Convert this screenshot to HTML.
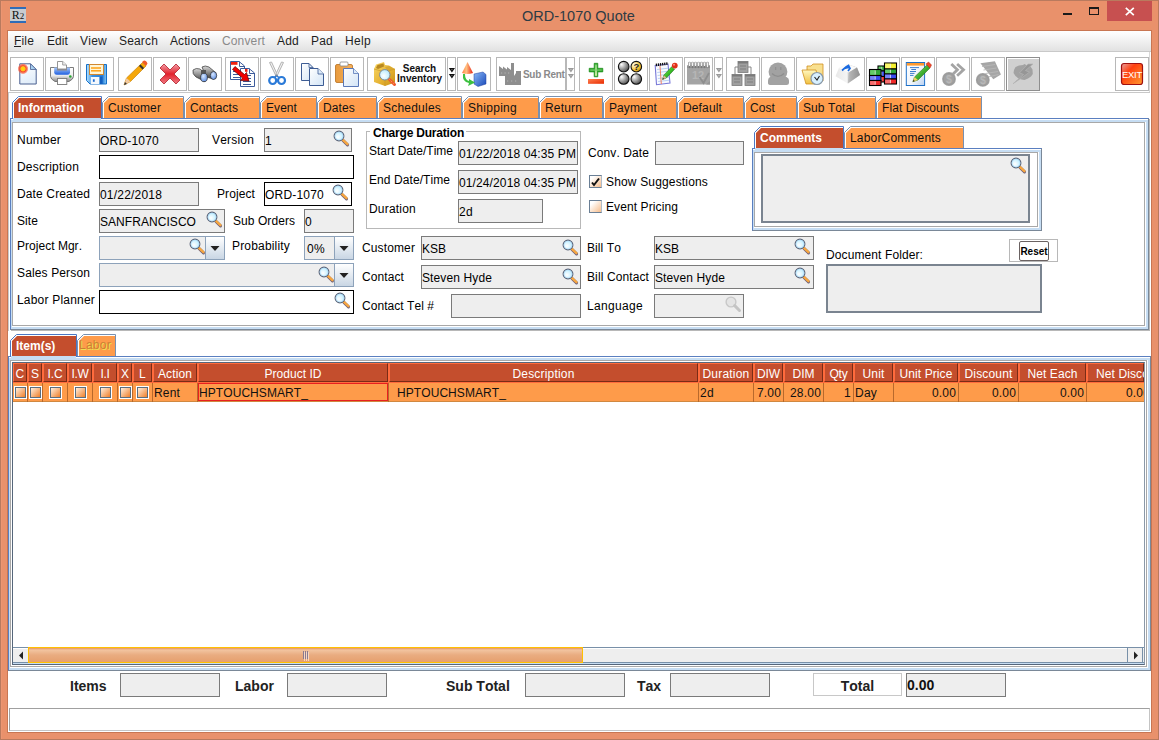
<!DOCTYPE html>
<html><head><meta charset="utf-8"><style>
*{box-sizing:border-box}
html,body{margin:0;padding:0;width:1159px;height:740px;overflow:hidden;background:#E9916B;font-family:"Liberation Sans",sans-serif;font-size:12px;color:#000}
.a{position:absolute}
.t{position:absolute;white-space:nowrap;line-height:14px;font-size:12px;font-kerning:none}
svg{position:absolute;overflow:visible}
</style></head><body>
<div class="a" style="left:0px;top:0px;width:1159px;height:740px;border:1px solid #B97A5E"></div>
<div class="a" style="left:10px;top:7px;width:16px;height:16px;background:#C9CCD0;border-top:2px solid #2F6CB8;border-bottom:2px solid #2F6CB8;font-family:'Liberation Serif';font-size:12px;line-height:12px;color:#111;text-align:center">R<span style="font-size:9px">2</span></div>
<div class="t" style="left:522px;top:6px;font-size:14.5px;line-height:20px;color:#2E3B44">ORD-1070 Quote</div>
<div class="a" style="left:1063px;top:13px;width:9px;height:2px;background:#1a1a1a"></div>
<div class="a" style="left:1089px;top:7px;width:10px;height:8px;border:1px solid #1a1a1a;border-top-width:2px"></div>
<div class="a" style="left:1107px;top:1px;width:45px;height:20px;background:#C75050"></div>
<svg style="left:1124px;top:6px" width="11" height="10" viewBox="0 0 11 10"><path d="M1.8 1.8L9.8 9.2M9.8 1.8L1.8 9.2" stroke="#fff" stroke-width="1.7"/></svg>
<div class="a" style="left:7px;top:30px;width:1145px;height:703px;background:#fff;border:1px solid #C87652"></div>
<div class="a" style="left:1px;top:1px;width:1px;height:738px;background:#EC9672"></div>
<div class="a" style="left:8px;top:31px;width:1143px;height:21px;background:linear-gradient(#FFFFFF,#F4F4F4 40%,#E2E2E2);border-bottom:1px solid #C9C9C9"></div>
<div class="t" style="left:14px;top:34px;line-height:14px;font-size:12px;color:#1E1E1E;letter-spacing:0.166px">File</div>
<div class="t" style="left:47px;top:34px;line-height:14px;font-size:12px;color:#1E1E1E;letter-spacing:0.081px">Edit</div>
<div class="t" style="left:80px;top:34px;line-height:14px;font-size:12px;color:#1E1E1E;letter-spacing:0.248px">View</div>
<div class="t" style="left:119px;top:34px;line-height:14px;font-size:12px;color:#1E1E1E;letter-spacing:0.163px">Search</div>
<div class="t" style="left:170px;top:34px;line-height:14px;font-size:12px;color:#1E1E1E;letter-spacing:0.093px">Actions</div>
<div class="t" style="left:222px;top:34px;line-height:14px;font-size:12px;color:#8A8A8A;letter-spacing:0.140px">Convert</div>
<div class="t" style="left:277px;top:34px;line-height:14px;font-size:12px;color:#1E1E1E;letter-spacing:0.216px">Add</div>
<div class="t" style="left:311px;top:34px;line-height:14px;font-size:12px;color:#1E1E1E;letter-spacing:0.216px">Pad</div>
<div class="t" style="left:345px;top:34px;line-height:14px;font-size:12px;color:#1E1E1E;letter-spacing:0.330px">Help</div>
<div class="a" style="left:14px;top:46px;width:7px;height:1px;background:#1E1E1E"></div>
<svg style="left:0;top:0" width="0" height="0"><defs><radialGradient id="glass" cx="0.4" cy="0.6" r="0.75"><stop offset="0" stop-color="#FFFFFF"/><stop offset="0.55" stop-color="#CFF2FF"/><stop offset="1" stop-color="#A6DDF6"/></radialGradient><linearGradient id="gcp" x1="0" y1="0" x2="1" y2="1"><stop offset="0" stop-color="#FFFFFF"/><stop offset="1" stop-color="#D2E4F6"/></linearGradient></defs></svg>
<div class="a" style="left:8px;top:92px;width:1142px;height:1px;background:#C8C8C8"></div>
<div class="a" style="left:1149px;top:52px;width:1px;height:40px;background:#D8D8D8"></div>
<div class="a" style="left:10px;top:57px;width:34px;height:34px;border:1px solid #B8B8B8;background:#fff"></div><svg style="left:10px;top:57px" width="34" height="34" viewBox="0 0 34 34"><defs><linearGradient id="gnew" x1="0" y1="0" x2="0.3" y2="1"><stop offset="0" stop-color="#FFFFFF"/><stop offset="1" stop-color="#E2EEFA"/></linearGradient><radialGradient id="gburst"><stop offset="0" stop-color="#FFE000"/><stop offset="0.4" stop-color="#FFC020"/><stop offset="0.55" stop-color="#F84828"/><stop offset="0.85" stop-color="#F86040" stop-opacity="0.6"/><stop offset="1" stop-color="#FF8060" stop-opacity="0"/></radialGradient></defs><path d="M9.8 6.8H20.5L26.2 12.5V27H9.8Z" fill="url(#gnew)" stroke="#4A6090" stroke-width="1"/><path d="M20.5 6.8V12.5H26.2Z" fill="#A8D0F0" stroke="#4A6090" stroke-width="0.8"/><circle cx="13" cy="11.8" r="5.5" fill="url(#gburst)"/></svg>
<div class="a" style="left:45px;top:57px;width:34px;height:34px;border:1px solid #B8B8B8;background:#fff"></div><svg style="left:45px;top:57px" width="34" height="34" viewBox="0 0 34 34"><defs><linearGradient id="gpr" x1="0" y1="0" x2="0" y2="1"><stop offset="0" stop-color="#FFFFFF"/><stop offset="0.55" stop-color="#F0F0F0"/><stop offset="1" stop-color="#8E8E8E"/></linearGradient><linearGradient id="gtray" x1="0" y1="0" x2="0" y2="1"><stop offset="0" stop-color="#A8C8F8"/><stop offset="1" stop-color="#1E5EE0"/></linearGradient></defs><path d="M5.5 10.5H28.5V19.5Q28.5 22 24 24.5H10Q5.5 22 5.5 19.5Z" fill="url(#gpr)" stroke="#6E6E6E" stroke-width="0.9"/><path d="M9.2 10.5H25V15.5Q25 17.8 22.5 17.8H11.7Q9.2 17.8 9.2 15.5Z" fill="url(#gtray)"/><rect x="12" y="12" width="10" height="1.6" fill="#8A8A98"/><path d="M12.5 4.5H17.7L21.5 8V12H12.5Z" fill="#fff" stroke="#8A8A8A" stroke-width="0.9"/><path d="M17.7 4.5V8H21.5" fill="#F0F0F0" stroke="#8A8A8A" stroke-width="0.8"/><rect x="12.5" y="21.5" width="9.3" height="6" fill="#fff" stroke="#7A7A7A" stroke-width="0.9"/><circle cx="25.3" cy="19.5" r="1.3" fill="#28A830"/></svg>
<div class="a" style="left:80px;top:57px;width:34px;height:34px;border:1px solid #B8B8B8;background:#fff"></div><svg style="left:80px;top:57px" width="34" height="34" viewBox="0 0 34 34"><defs><linearGradient id="gfl" x1="0" y1="0" x2="1" y2="0"><stop offset="0" stop-color="#B8E4FF"/><stop offset="0.3" stop-color="#3A90E0"/><stop offset="0.8" stop-color="#2A80D8"/><stop offset="1" stop-color="#8ACCF8"/></linearGradient></defs><path d="M6.5 7.5H26.5V27H10L6.5 23.5Z" fill="url(#gfl)" stroke="#1670C8" stroke-width="1"/><rect x="9.5" y="7.5" width="14" height="10" fill="#FFF6D8" stroke="#D08830" stroke-width="1"/><rect x="11" y="10.2" width="10" height="1.6" fill="#FFA620"/><rect x="11" y="13" width="10" height="1.6" fill="#FFA620"/><rect x="10.8" y="20" width="8.5" height="7" fill="#F4F8FC"/><rect x="12.9" y="22.3" width="1.8" height="2.5" fill="#1E6AD0"/><rect x="20" y="19.5" width="2.5" height="7.5" fill="#1460C0"/></svg>
<div class="a" style="left:118px;top:57px;width:34px;height:34px;border:1px solid #B8B8B8;background:#fff"></div><svg style="left:118px;top:57px" width="34" height="34" viewBox="0 0 34 34"><path d="M6 28L8.5 21L24.5 5.5L28 9L12.5 24.5Z" fill="#F5A70A" stroke="#C07800" stroke-width="0.6"/><path d="M6 28L8.5 21L12.5 24.5Z" fill="#F2C9A0"/><path d="M6 28L7 25L9 27Z" fill="#333"/><path d="M22.5 7.5L26 11L24.5 12.5L21 9Z" fill="#333"/><path d="M24 5L26 3.5Q28.5 3.5 29.5 6.5L28 9Z" fill="#F05A28"/></svg>
<div class="a" style="left:153px;top:57px;width:34px;height:34px;border:1px solid #B8B8B8;background:#fff"></div><svg style="left:153px;top:57px" width="34" height="34" viewBox="0 0 34 34"><defs><linearGradient id="gx" x1="0" y1="0" x2="0" y2="1"><stop offset="0" stop-color="#F4A0A8"/><stop offset="0.5" stop-color="#E2202C"/><stop offset="1" stop-color="#F07C84"/></linearGradient></defs><path d="M7 11L11 7L17 13L23 7L27 11L21 17L27 23L23 27L17 21L11 27L7 23L13 17Z" fill="url(#gx)" stroke="#B01C28" stroke-width="0.8" stroke-linejoin="round"/></svg>
<div class="a" style="left:188px;top:57px;width:34px;height:34px;border:1px solid #B8B8B8;background:#fff"></div><svg style="left:188px;top:57px" width="34" height="34" viewBox="0 0 34 34"><defs><linearGradient id="gbn" x1="0" y1="0" x2="0" y2="1"><stop offset="0" stop-color="#D8D8D8"/><stop offset="0.5" stop-color="#8A8A8A"/><stop offset="1" stop-color="#3A3A3A"/></linearGradient><radialGradient id="glens" cx="0.4" cy="0.35" r="0.7"><stop offset="0" stop-color="#D8E8FF"/><stop offset="1" stop-color="#5A8AE0"/></radialGradient></defs><path d="M14 10Q17 8 21 10L27 15Q29 19 26 22L18 20Z" fill="url(#gbn)" stroke="#333" stroke-width="0.7"/><path d="M5 13Q8 10.5 12 12L18 17Q20 21 17 24.5L8 20Q4 17 5 13Z" fill="url(#gbn)" stroke="#333" stroke-width="0.7"/><rect x="13" y="13" width="5" height="4" fill="#555"/><ellipse cx="16" cy="20.5" rx="3.4" ry="4.2" fill="url(#glens)" stroke="#333" stroke-width="0.8"/><ellipse cx="25.5" cy="18.5" rx="3.2" ry="4" fill="url(#glens)" stroke="#333" stroke-width="0.8"/></svg>
<div class="a" style="left:225px;top:57px;width:34px;height:34px;border:1px solid #B8B8B8;background:#fff"></div><svg style="left:225px;top:57px" width="34" height="34" viewBox="0 0 34 34"><path d="M5.5 4.5H14L19.5 9V22.5H5.5Z" fill="#fff" stroke="#3D5C9C" stroke-width="1"/><path d="M14.5 4.5V9.5H19.5" fill="none" stroke="#3D5C9C" stroke-width="1"/><rect x="6" y="5" width="6.5" height="2.8" fill="#F02010"/><path d="M8 14.5H12M8 17.5H16M8 20.5H16" stroke="#3D5C9C" stroke-width="1"/><path d="M15.5 11.5H24L29.5 16V29.5H15.5Z" fill="#fff" stroke="#3D5C9C" stroke-width="1"/><path d="M24.5 11.5V16.5H29.5" fill="none" stroke="#3D5C9C" stroke-width="1"/><rect x="20" y="12" width="2.5" height="2.8" fill="#F02010"/><path d="M18 18.5H26M18 21.5H26M18 24.5H26M18 27.5H26" stroke="#3D5C9C" stroke-width="1"/><path d="M7.5 12.5L10 9.5L19.5 17.5L21.5 15.5L24 24L15.5 23.5L17.5 21Z" fill="#F00000" stroke="#600000" stroke-width="0.7" stroke-linejoin="round"/></svg>
<div class="a" style="left:260px;top:57px;width:34px;height:34px;border:1px solid #B8B8B8;background:#fff"></div><svg style="left:260px;top:57px" width="34" height="34" viewBox="0 0 34 34"><path d="M9.5 5.5L11.5 5L17.5 18L16 19Z" fill="#F0F0F0" stroke="#B4B4B4" stroke-width="1" stroke-linejoin="round"/><path d="M23.5 5.5L21.5 5L15.5 18L17 19Z" fill="#F0F0F0" stroke="#B4B4B4" stroke-width="1" stroke-linejoin="round"/><circle cx="12.7" cy="23.5" r="3.5" fill="none" stroke="#2A7AD8" stroke-width="2.2"/><circle cx="21.5" cy="23.5" r="3.5" fill="none" stroke="#2A7AD8" stroke-width="2.2"/><path d="M14.5 20.5L16.5 18.5L18.8 20.5" fill="none" stroke="#2A7AD8" stroke-width="1.6"/><circle cx="16.5" cy="18.5" r="0.9" fill="#888"/></svg>
<div class="a" style="left:295px;top:57px;width:34px;height:34px;border:1px solid #B8B8B8;background:#fff"></div><svg style="left:295px;top:57px" width="34" height="34" viewBox="0 0 34 34"><defs><linearGradient id="gcp" x1="0" y1="0" x2="1" y2="1"><stop offset="0" stop-color="#FFFFFF"/><stop offset="1" stop-color="#D2E4F6"/></linearGradient></defs><path d="M6.5 6.5H14L18 10.5V23.5H6.5Z" fill="url(#gcp)" stroke="#3D5C94"/><path d="M14 6.5V10.5H18" fill="none" stroke="#3D5C94" stroke-width="0.8"/><path d="M14.5 11.5H23L28.5 17V28.5H14.5Z" fill="url(#gcp)" stroke="#3D5C94"/><path d="M23 11.5V17H28.5" fill="#DCEBFA" stroke="#3D5C94" stroke-width="0.8"/></svg>
<div class="a" style="left:330px;top:57px;width:34px;height:34px;border:1px solid #B8B8B8;background:#fff"></div><svg style="left:330px;top:57px" width="34" height="34" viewBox="0 0 34 34"><defs><linearGradient id="gps" x1="0" y1="0" x2="1" y2="0"><stop offset="0" stop-color="#E89A3C"/><stop offset="1" stop-color="#F6B25E"/></linearGradient></defs><rect x="5.5" y="7.5" width="17" height="18" rx="1.5" fill="url(#gps)" stroke="#B87020" stroke-width="0.8"/><rect x="10" y="5" width="8" height="4" rx="1" fill="#fff" stroke="#888" stroke-width="0.8"/><path d="M13.5 11.5H23.5L28.5 16.5V29.5H13.5Z" fill="url(#gcp)" stroke="#5A78B8"/><path d="M23.5 11.5V16.5H28.5" fill="#DCEBFA" stroke="#5A78B8" stroke-width="0.8"/></svg>
<div class="a" style="left:367px;top:57px;width:79px;height:34px;border:1px solid #B8B8B8;background:#fff"></div><svg style="left:367px;top:57px" width="79" height="34" viewBox="0 0 79 34"><defs><linearGradient id="gbox" x1="0" y1="0" x2="1" y2="1"><stop offset="0" stop-color="#F8D868"/><stop offset="0.6" stop-color="#E4B030"/><stop offset="1" stop-color="#C89018"/></linearGradient></defs><path d="M7 12L9 7.5L17 5L18 8L22 8.5L28 12V25.5L18 29L7 25Z" fill="url(#gbox)"/><path d="M9 11L10.5 8L16.5 6.5L17 9.5L11 12Z" fill="#B88820"/><path d="M18 10L22 9L27 12L21 14Z" fill="#D8A830"/><path d="M7 12L18 15L28 12M18 15V29" fill="none" stroke="#C89828" stroke-width="0.7"/><line x1="22.5" y1="22.5" x2="27.5" y2="27.5" stroke="#F05830" stroke-width="3" stroke-linecap="round"/><line x1="22.5" y1="22.5" x2="27.5" y2="27.5" stroke="#F8C040" stroke-width="1" stroke-dasharray="1.2 1.2"/><circle cx="17.8" cy="17.8" r="5.2" fill="url(#glass)" stroke="#7A8A9A" stroke-width="1"/></svg>
<div class="t" style="left:397px;top:63px;width:45px;text-align:center;font-weight:bold;font-size:10px;line-height:12px;color:#111">Search</div>
<div class="t" style="left:397px;top:72.5px;width:45px;text-align:center;font-weight:bold;font-size:10px;line-height:12px;color:#111">Inventory</div>
<div class="a" style="left:447px;top:57px;width:9px;height:34px;border:1px solid #B8B8B8;background:#fff"></div><svg style="left:447px;top:57px" width="9" height="34" viewBox="0 0 9 34"><path d="M1.8 11H8L4.9 15.6Z" fill="#111"/><path d="M1.8 17H8L4.9 21.6Z" fill="#111"/><circle cx="4.9" cy="12.6" r="0.7" fill="#777"/><circle cx="4.9" cy="18.6" r="0.7" fill="#777"/></svg>
<div class="a" style="left:457px;top:57px;width:34px;height:34px;border:1px solid #B8B8B8;background:#fff"></div><svg style="left:457px;top:57px" width="34" height="34" viewBox="0 0 34 34"><defs><linearGradient id="gcone" x1="0" y1="0" x2="1" y2="0"><stop offset="0" stop-color="#FF8040"/><stop offset="0.4" stop-color="#FFC080"/><stop offset="1" stop-color="#E82010"/></linearGradient><linearGradient id="gcube" x1="0" y1="0" x2="1" y2="1"><stop offset="0" stop-color="#8AB8F8"/><stop offset="1" stop-color="#1848B8"/></linearGradient></defs><path d="M10.5 5L16 16Q10.5 18 5 16Z" fill="url(#gcone)"/><path d="M17 17L26 15L29 17.5V27L21 29.5L17 27Z" fill="url(#gcube)" stroke="#2040A0" stroke-width="0.5"/><path d="M6 17Q5 25 12 26L11 29L18 25.5L12 22L12 24Q8 23 8 17Z" fill="#3CC040"/></svg>
<div class="a" style="left:496px;top:57px;width:70px;height:34px;border:1px solid #B8B8B8;background:#fff"></div><svg style="left:496px;top:57px" width="70" height="34" viewBox="0 0 70 34"><path d="M3 9L7 12V9.5L11 12.5V10L15 13V6H18V19H3Z" fill="#8E8E8E"/><path d="M9 15H18V19L20 16V14H25V28H9Z" fill="#8E8E8E"/><path d="M5 16H6.2M8.5 16H9.7M12 16H13.2M11 24H12.2M15 24H16.2M19 24H20.2" stroke="#B4B4B4" stroke-width="1.2"/></svg>
<div class="t" style="left:523px;top:69px;font-weight:bold;font-size:10px;line-height:12px;color:#8A8A8A;letter-spacing:-0.3px">Sub Rent</div>
<div class="a" style="left:566px;top:57px;width:9px;height:34px;border:1px solid #B8B8B8;background:#fff"></div><svg style="left:566px;top:57px" width="9" height="34" viewBox="0 0 9 34"><path d="M1.8 11H8L4.9 15.6Z" fill="#9A9A9A"/><path d="M1.8 17H8L4.9 21.6Z" fill="#9A9A9A"/><circle cx="4.9" cy="12.6" r="0.7" fill="#C4C4C4"/><circle cx="4.9" cy="18.6" r="0.7" fill="#C4C4C4"/></svg>
<div class="a" style="left:579px;top:57px;width:34px;height:34px;border:1px solid #B8B8B8;background:#fff"></div><svg style="left:579px;top:57px" width="34" height="34" viewBox="0 0 34 34"><defs><linearGradient id="gmn" x1="0" y1="0" x2="1" y2="1"><stop offset="0" stop-color="#FF8050"/><stop offset="1" stop-color="#E82A00"/></linearGradient><linearGradient id="gpl" x1="0" y1="0" x2="0" y2="1"><stop offset="0" stop-color="#8AD880"/><stop offset="1" stop-color="#F4FFC0"/></linearGradient></defs><path d="M15.2 6.3H18.8V11.3H23.8V14.9H18.8V19.8H15.2V14.9H10.2V11.3H15.2Z" fill="#2EA82A" stroke="#1A8A18" stroke-width="0.7"/><rect x="16.2" y="7.5" width="1.6" height="11.3" fill="url(#gpl)"/><rect x="11.3" y="12.3" width="11.4" height="1.6" fill="#7ACC70" opacity="0.7"/><rect x="9" y="22" width="16" height="4.8" fill="url(#gmn)"/></svg>
<div class="a" style="left:614px;top:57px;width:34px;height:34px;border:1px solid #B8B8B8;background:#fff"></div><svg style="left:614px;top:57px" width="34" height="34" viewBox="0 0 34 34"><defs><radialGradient id="gball" cx="0.3" cy="0.3" r="0.85"><stop offset="0" stop-color="#FFFFFF"/><stop offset="0.5" stop-color="#9A9A9A"/><stop offset="1" stop-color="#3A3A3A"/></radialGradient><radialGradient id="gyb" cx="0.3" cy="0.3" r="0.85"><stop offset="0" stop-color="#FFFFF0"/><stop offset="0.6" stop-color="#F4C030"/><stop offset="1" stop-color="#B08010"/></radialGradient></defs><circle cx="9.7" cy="9.7" r="5.3" fill="url(#gball)" stroke="#111" stroke-width="1.1"/><circle cx="22.3" cy="9.7" r="5.3" fill="url(#gyb)" stroke="#111" stroke-width="1.1"/><circle cx="9.7" cy="22" r="5.3" fill="url(#gball)" stroke="#111" stroke-width="1.1"/><circle cx="22.3" cy="22" r="5.3" fill="url(#gball)" stroke="#111" stroke-width="1.1"/><text x="22.3" y="13.3" font-family="Liberation Sans" font-weight="bold" font-size="9.5" text-anchor="middle" fill="#222">?</text></svg>
<div class="a" style="left:649px;top:57px;width:34px;height:34px;border:1px solid #B8B8B8;background:#fff"></div><svg style="left:649px;top:57px" width="34" height="34" viewBox="0 0 34 34"><defs><linearGradient id="gpen" x1="0" y1="0" x2="1" y2="1"><stop offset="0" stop-color="#9AF070"/><stop offset="0.5" stop-color="#3CC028"/><stop offset="1" stop-color="#107A08"/></linearGradient></defs><path d="M6.2 8.5L19 7L21 26L7.5 27.7Z" fill="#F8FAFF" stroke="#7878D8" stroke-width="1.1"/><path d="M8 12.5L19.3 11.2M8.3 15.5L19.6 14.2M8.6 18.5L19.9 17.2M8.9 21.5L20.2 20.2M9.2 24.5L20.5 23.2" stroke="#A8C8F0" stroke-width="0.8"/><path d="M11 9L12.3 27" stroke="#F07050" stroke-width="0.9"/><path d="M6.8 8L19.2 6.5" stroke="#111" stroke-width="2.6" stroke-dasharray="1.3 0.8"/><path d="M13.5 22.5L14.8 18.2L22.8 9.6L25.6 12.2L17.6 20.8Z" fill="url(#gpen)" stroke="#106010" stroke-width="0.5"/><path d="M13.5 22.5L14.8 18.2L17.6 20.8Z" fill="#D8B890"/><path d="M13.5 22.5L14 20.8L15.3 22Z" fill="#333"/><path d="M22.8 9.6L25.6 12.2L26.6 11.2L23.8 8.6Z" fill="#C8C8C8"/><circle cx="25.8" cy="8.6" r="2.9" fill="#E03018"/><circle cx="25" cy="7.8" r="1" fill="#FF9080"/></svg>
<div class="a" style="left:684px;top:57px;width:29px;height:34px;border:1px solid #B8B8B8;background:#fff"></div><svg style="left:684px;top:57px" width="29" height="34" viewBox="0 0 29 34"><path d="M3 8.5H26V27.5H3Z" fill="#A4A4A4"/><path d="M3 8.5H26V11H3Z" fill="#929292"/><path d="M5.5 6V10M8.5 6V10M11.5 6V10M14.5 6V10M17.5 6V10M20.5 6V10M23.5 6V10" stroke="#8A8A8A" stroke-width="2.6" stroke-linecap="round"/><path d="M5.5 6V9.5M8.5 6V9.5M11.5 6V9.5M14.5 6V9.5M17.5 6V9.5M20.5 6V9.5M23.5 6V9.5" stroke="#F4F4F4" stroke-width="1.3" stroke-linecap="round"/><path d="M5.5 9V11M8.5 9V11M11.5 9V11M14.5 9V11M17.5 9V11M20.5 9V11" stroke="#7A7A7A" stroke-width="1"/><text x="14" y="22" font-family="Liberation Sans" font-weight="bold" font-size="11" text-anchor="middle" fill="#B6B6B6">12</text><path d="M15.5 20L19.5 26L25 16" stroke="#8E8E8E" stroke-width="1.8" fill="none"/><path d="M14 27.5H22L26 24V27.5Z" fill="#969696"/></svg>
<div class="a" style="left:714px;top:57px;width:9px;height:34px;border:1px solid #B8B8B8;background:#fff"></div><svg style="left:714px;top:57px" width="9" height="34" viewBox="0 0 9 34"><path d="M1.8 11H8L4.9 15.6Z" fill="#9A9A9A"/><path d="M1.8 17H8L4.9 21.6Z" fill="#9A9A9A"/><circle cx="4.9" cy="12.6" r="0.7" fill="#C4C4C4"/><circle cx="4.9" cy="18.6" r="0.7" fill="#C4C4C4"/></svg>
<div class="a" style="left:726px;top:57px;width:34px;height:34px;border:1px solid #B8B8B8;background:#fff"></div><svg style="left:726px;top:57px" width="34" height="34" viewBox="0 0 34 34"><rect x="12" y="4.5" width="10" height="11" fill="#A0A0A0" stroke="#7A7A7A" stroke-width="0.8"/><rect x="6" y="17.5" width="10" height="11" fill="#A0A0A0" stroke="#7A7A7A" stroke-width="0.8"/><rect x="19" y="17.5" width="10" height="11" fill="#A0A0A0" stroke="#7A7A7A" stroke-width="0.8"/><path d="M12 10H9V17.5M22 10H25V17.5" fill="none" stroke="#7A7A7A" stroke-width="0.9"/><path d="M14 9H20M14 12H20M8 22H14M8 25H14M21 22H27M21 25H27" stroke="#7A7A7A" stroke-width="0.9"/><rect x="12" y="4.5" width="10" height="2" fill="#7A7A7A"/><rect x="6" y="17.5" width="10" height="2" fill="#7A7A7A"/><rect x="19" y="17.5" width="10" height="2" fill="#7A7A7A"/></svg>
<div class="a" style="left:761px;top:57px;width:34px;height:34px;border:1px solid #B8B8B8;background:#fff"></div><svg style="left:761px;top:57px" width="34" height="34" viewBox="0 0 34 34"><circle cx="17" cy="14.8" r="9.4" fill="#A2A2A2"/><path d="M9 20H25.5Q28 21 28 23.5V26Q28 28 25.5 28H10Q7 28 7 26V23.5Q7 21 9 20Z" fill="#A2A2A2"/><path d="M14.7 10V13M19.8 10V13" stroke="#8E8E8E" stroke-width="1.1"/><path d="M11 16.5Q17 22.5 23 16.5" stroke="#8E8E8E" stroke-width="1.2" fill="none"/></svg>
<div class="a" style="left:796px;top:57px;width:34px;height:34px;border:1px solid #B8B8B8;background:#fff"></div><svg style="left:796px;top:57px" width="34" height="34" viewBox="0 0 34 34"><defs><linearGradient id="gfd" x1="0" y1="0" x2="0" y2="1"><stop offset="0" stop-color="#FFF8C0"/><stop offset="1" stop-color="#F0C040"/></linearGradient></defs><path d="M11 9H15L17 7H27V24H11Z" fill="#F8E090" stroke="#D09020" stroke-width="0.8"/><path d="M6 13H20L23 27H10Z" fill="url(#gfd)" stroke="#D09020" stroke-width="0.8"/><circle cx="21" cy="21.5" r="6" fill="#D8F0FF" stroke="#8898A8" stroke-width="1.2"/><path d="M18.5 20L21 23L23.5 19" stroke="#222" stroke-width="1.1" fill="none"/></svg>
<div class="a" style="left:831px;top:57px;width:34px;height:34px;border:1px solid #B8B8B8;background:#fff"></div><svg style="left:831px;top:57px" width="34" height="34" viewBox="0 0 34 34"><defs><linearGradient id="gky" x1="0" y1="0" x2="1" y2="0"><stop offset="0" stop-color="#E8E8E8"/><stop offset="0.45" stop-color="#F4F4F4"/><stop offset="0.6" stop-color="#C8C8C8"/><stop offset="1" stop-color="#8A8A8A"/></linearGradient></defs><path d="M4.5 19.3L7.9 10.9L16.3 6.9L26 10.6L29 18.1L16.9 26.6Z" fill="url(#gky)"/><path d="M7.9 10.9L16.3 6.9L26 10.6L17.5 15.5Z" fill="#FAFAFA"/><path d="M17.5 15.5L26 10.6L29 18.1L16.9 26.6Z" fill="#9A9A9A" opacity="0.45"/><path d="M11 13.5L15 10L17.5 8.5L19 11.5L17 14M12.8 11.8L18.5 10" stroke="#1A6AE0" stroke-width="1.7" fill="none"/></svg>
<div class="a" style="left:866px;top:57px;width:34px;height:34px;border:1px solid #B8B8B8;background:#fff"></div><svg style="left:866px;top:57px" width="34" height="34" viewBox="0 0 34 34"><rect x="12" y="9" width="7.5" height="5" fill="#30A838" stroke="#000" stroke-width="1.1"/><rect x="12.6" y="9.6" width="3.15" height="3.8" fill="#90E890" opacity="0.55"/><path d="M15.75 9.8V13.2" stroke="#F0F0F0" stroke-width="0.8" opacity="0.9"/><rect x="12" y="14" width="7.5" height="5.5" fill="#3A4CF0" stroke="#000" stroke-width="1.1"/><rect x="12.6" y="14.6" width="3.15" height="4.3" fill="#A8B0FF" opacity="0.55"/><path d="M15.75 14.8V18.7" stroke="#F0F0F0" stroke-width="0.8" opacity="0.9"/><rect x="12" y="19.5" width="7.5" height="5.5" fill="#F02A2A" stroke="#000" stroke-width="1.1"/><rect x="12.6" y="20.1" width="3.15" height="4.3" fill="#FFA8A8" opacity="0.55"/><path d="M15.75 20.3V24.2" stroke="#F0F0F0" stroke-width="0.8" opacity="0.9"/><rect x="3.5" y="12.5" width="11.5" height="6.0" fill="#30A838" stroke="#000" stroke-width="1.1"/><rect x="4.1" y="13.1" width="5.15" height="4.8" fill="#90E890" opacity="0.55"/><path d="M9.25 13.3V17.7" stroke="#F0F0F0" stroke-width="0.8" opacity="0.9"/><rect x="3.5" y="18.5" width="11.5" height="5.0" fill="#3A4CF0" stroke="#000" stroke-width="1.1"/><rect x="4.1" y="19.1" width="5.15" height="3.8" fill="#A8B0FF" opacity="0.55"/><path d="M9.25 19.3V22.7" stroke="#F0F0F0" stroke-width="0.8" opacity="0.9"/><rect x="3.5" y="23.5" width="11.5" height="5.0" fill="#F02A2A" stroke="#000" stroke-width="1.1"/><rect x="4.1" y="24.1" width="5.15" height="3.8" fill="#FFA8A8" opacity="0.55"/><path d="M9.25 24.3V27.7" stroke="#F0F0F0" stroke-width="0.8" opacity="0.9"/><rect x="18.5" y="6" width="12" height="6" fill="#F4F030" stroke="#000" stroke-width="1.1"/><rect x="19.1" y="6.6" width="5.4" height="4.8" fill="#FFFFA0" opacity="0.55"/><path d="M24.5 6.8V11.2" stroke="#F0F0F0" stroke-width="0.8" opacity="0.9"/><rect x="18.5" y="12" width="12" height="5" fill="#30A838" stroke="#000" stroke-width="1.1"/><rect x="19.1" y="12.6" width="5.4" height="3.8" fill="#90E890" opacity="0.55"/><path d="M24.5 12.8V16.2" stroke="#F0F0F0" stroke-width="0.8" opacity="0.9"/><rect x="18.5" y="17" width="12" height="5" fill="#3A4CF0" stroke="#000" stroke-width="1.1"/><rect x="19.1" y="17.6" width="5.4" height="3.8" fill="#A8B0FF" opacity="0.55"/><path d="M24.5 17.8V21.2" stroke="#F0F0F0" stroke-width="0.8" opacity="0.9"/><rect x="18.5" y="22" width="12" height="5" fill="#F02A2A" stroke="#000" stroke-width="1.1"/><rect x="19.1" y="22.6" width="5.4" height="3.8" fill="#FFA8A8" opacity="0.55"/><path d="M24.5 22.8V26.2" stroke="#F0F0F0" stroke-width="0.8" opacity="0.9"/></svg>
<div class="a" style="left:901px;top:57px;width:34px;height:34px;border:1px solid #B8B8B8;background:#fff"></div><svg style="left:901px;top:57px" width="34" height="34" viewBox="0 0 34 34"><defs><linearGradient id="ged" x1="0" y1="0" x2="1" y2="1"><stop offset="0" stop-color="#FFFFFF"/><stop offset="0.6" stop-color="#F0F4FA"/><stop offset="1" stop-color="#B8D0F0"/></linearGradient><linearGradient id="gpen2" x1="0" y1="0" x2="1" y2="1"><stop offset="0" stop-color="#A8F088"/><stop offset="0.5" stop-color="#40B030"/><stop offset="1" stop-color="#187010"/></linearGradient></defs><rect x="5.3" y="5.5" width="18.3" height="23" fill="url(#ged)" stroke="#1E70C8" stroke-width="1"/><rect x="5.8" y="6" width="17.3" height="2.6" fill="#FF9A30"/><path d="M9 10.6H18M10.3 12.5H15M9 14.5H15M9 16.4H13.5M9 18.4H12.5" stroke="#2A70C8" stroke-width="0.9"/><path d="M11.8 24.8L13.5 20L26 8L29 11L17 23Z" fill="url(#gpen2)" stroke="#1A6010" stroke-width="0.5"/><path d="M11.8 24.8L13.5 20L17 23Z" fill="#F0D060"/><path d="M11.8 24.8L12.4 23L13.8 24Z" fill="#111"/><path d="M25 7L27.5 5L30.5 8L29 11Z" fill="#F04828" stroke="#B02010" stroke-width="0.5"/></svg>
<div class="a" style="left:936px;top:57px;width:34px;height:34px;border:1px solid #B8B8B8;background:#fff"></div><svg style="left:936px;top:57px" width="34" height="34" viewBox="0 0 34 34"><path d="M15.3 7L21.4 12.7L16 18M21.1 7L27.5 12.7L21.1 18.7" stroke="#A4A4A4" stroke-width="2.8" fill="none" stroke-linejoin="miter"/><circle cx="13" cy="22" r="6.9" fill="#A2A2A2"/><circle cx="13" cy="22" r="5.6" fill="none" stroke="#989898" stroke-width="0.8"/><text x="13" y="26" font-family="Liberation Sans" font-weight="bold" font-size="10.5" text-anchor="middle" fill="#B8B8B8">$</text></svg>
<div class="a" style="left:971px;top:57px;width:34px;height:34px;border:1px solid #B8B8B8;background:#fff"></div><svg style="left:971px;top:57px" width="34" height="34" viewBox="0 0 34 34"><path d="M9.4 6.3L23.9 4.2L29.9 17.5L22.3 22.3Z" fill="#A6A6A6"/><path d="M11 9.5L24 7.5M12.5 13L25.5 11M14.5 16.5L27 14.5M17 20L27.5 17.5" stroke="#B8B8B8" stroke-width="0.9"/><circle cx="11.8" cy="22.9" r="6.9" fill="#A2A2A2"/><circle cx="11.8" cy="22.9" r="5.6" fill="none" stroke="#989898" stroke-width="0.8"/><text x="11.8" y="26.9" font-family="Liberation Sans" font-weight="bold" font-size="10.5" text-anchor="middle" fill="#B8B8B8">$</text></svg>
<div class="a" style="left:1006px;top:57px;width:34px;height:34px;border:1px solid #8E8E8E;background:#D0D0D0"></div>
<div class="a" style="left:1007px;top:58px;width:32px;height:32px;border-top:1px solid #fff;border-left:1px solid #fff"></div>
<div class="a" style="left:1006px;top:57px;width:34px;height:34px;border:1px solid transparent;background:transparent"></div><svg style="left:1006px;top:57px" width="34" height="34" viewBox="0 0 34 34"><path d="M8 13L9.5 10L13 8.5L17 8L18.5 7L21 8.5L24.5 9.5L26.5 12.5L26.8 17L25 19.5L22 21.5L18.5 23L15.5 22.5L12.5 21.5L9.5 19L7.5 16Z" fill="#A2A2A2"/><path d="M22 7L27 7L19.5 13.5L23.5 15.2L7 26.8L17.5 17.5L13.5 15.8Z" fill="#969696" stroke="#B4B4B4" stroke-width="0.7" stroke-linejoin="round"/></svg>
<div class="a" style="left:1115px;top:57px;width:34px;height:34px;border:1px solid #B8B8B8;background:#fff"></div><svg style="left:1115px;top:57px" width="34" height="34" viewBox="0 0 34 34"><defs><linearGradient id="gex" x1="0" y1="0" x2="1" y2="1"><stop offset="0" stop-color="#E8A0A0"/><stop offset="0.35" stop-color="#FF4010"/><stop offset="1" stop-color="#FF9A30"/></linearGradient></defs><rect x="6.5" y="6.5" width="21" height="21" rx="2.5" fill="url(#gex)" stroke="#A01010" stroke-width="1.2"/><text x="17" y="21" font-family="Liberation Sans" font-size="9.5" text-anchor="middle" fill="#fff" letter-spacing="-0.3">EXIT</text></svg>
<div class="a" style="left:11px;top:119px;width:1139px;height:212px;background:#B8B8B8"></div>
<div class="a" style="left:8px;top:93px;width:1px;height:238px;background:#C8C8C8"></div>
<div class="a" style="left:10px;top:118px;width:1139px;height:212px;background:#C6DDF3;border:1px solid #5A7FC0;border-bottom-color:#7A8898;border-right-color:#7A8898"></div>
<div class="a" style="left:11px;top:119px;width:1137px;height:1px;background:#fff"></div>
<div class="a" style="left:12px;top:122px;width:1134px;height:205px;background:#fff"></div>
<div class="a" style="left:12px;top:122px;width:1133px;height:204px;background:#fff;border:1px solid #A8A8A8"></div>
<svg style="left:0;top:0" width="1159" height="740" viewBox="0 0 1159 740"><path d="M13 119V102.5L18.5 97H101V119Z" fill="#fff"/><path d="M14 119V103L19 98H101V119Z" fill="#C44E2D"/><path d="M12.5 119V102.5L18.5 96.5H101.5V119" fill="none" stroke="#4C78C4" stroke-width="1"/><rect x="13" y="118" width="88" height="1" fill="#C6DDF3"/><rect x="13" y="119" width="88" height="1" fill="#C6DDF3"/><path d="M103 118V102.5L108.5 97H183V118Z" fill="#fff"/><path d="M104 118V103L109 98H183V118Z" fill="#FE9B4A"/><path d="M102.5 118V102.5L108.5 96.5H183.5V118" fill="none" stroke="#7890B0" stroke-width="1"/><path d="M185 118V102.5L190.5 97H259V118Z" fill="#fff"/><path d="M186 118V103L191 98H259V118Z" fill="#FE9B4A"/><path d="M184.5 118V102.5L190.5 96.5H259.5V118" fill="none" stroke="#7890B0" stroke-width="1"/><path d="M261 118V102.5L266.5 97H316V118Z" fill="#fff"/><path d="M262 118V103L267 98H316V118Z" fill="#FE9B4A"/><path d="M260.5 118V102.5L266.5 96.5H316.5V118" fill="none" stroke="#7890B0" stroke-width="1"/><path d="M318 118V102.5L323.5 97H376V118Z" fill="#fff"/><path d="M319 118V103L324 98H376V118Z" fill="#FE9B4A"/><path d="M317.5 118V102.5L323.5 96.5H376.5V118" fill="none" stroke="#7890B0" stroke-width="1"/><path d="M378 118V102.5L383.5 97H461V118Z" fill="#fff"/><path d="M379 118V103L384 98H461V118Z" fill="#FE9B4A"/><path d="M377.5 118V102.5L383.5 96.5H461.5V118" fill="none" stroke="#7890B0" stroke-width="1"/><path d="M463 118V102.5L468.5 97H538V118Z" fill="#fff"/><path d="M464 118V103L469 98H538V118Z" fill="#FE9B4A"/><path d="M462.5 118V102.5L468.5 96.5H538.5V118" fill="none" stroke="#7890B0" stroke-width="1"/><path d="M540 118V102.5L545.5 97H602V118Z" fill="#fff"/><path d="M541 118V103L546 98H602V118Z" fill="#FE9B4A"/><path d="M539.5 118V102.5L545.5 96.5H602.5V118" fill="none" stroke="#7890B0" stroke-width="1"/><path d="M604 118V102.5L609.5 97H676V118Z" fill="#fff"/><path d="M605 118V103L610 98H676V118Z" fill="#FE9B4A"/><path d="M603.5 118V102.5L609.5 96.5H676.5V118" fill="none" stroke="#7890B0" stroke-width="1"/><path d="M678 118V102.5L683.5 97H743V118Z" fill="#fff"/><path d="M679 118V103L684 98H743V118Z" fill="#FE9B4A"/><path d="M677.5 118V102.5L683.5 96.5H743.5V118" fill="none" stroke="#7890B0" stroke-width="1"/><path d="M745 118V102.5L750.5 97H796V118Z" fill="#fff"/><path d="M746 118V103L751 98H796V118Z" fill="#FE9B4A"/><path d="M744.5 118V102.5L750.5 96.5H796.5V118" fill="none" stroke="#7890B0" stroke-width="1"/><path d="M798 118V102.5L803.5 97H875V118Z" fill="#fff"/><path d="M799 118V103L804 98H875V118Z" fill="#FE9B4A"/><path d="M797.5 118V102.5L803.5 96.5H875.5V118" fill="none" stroke="#7890B0" stroke-width="1"/><path d="M877 118V102.5L882.5 97H981V118Z" fill="#fff"/><path d="M878 118V103L883 98H981V118Z" fill="#FE9B4A"/><path d="M876.5 118V102.5L882.5 96.5H981.5V118" fill="none" stroke="#7890B0" stroke-width="1"/></svg>
<div class="t" style="left:18px;top:101px;line-height:14px;font-size:12px;color:#fff;font-weight:bold">Information</div>
<div class="t" style="left:108px;top:101px;line-height:14px;font-size:12px;color:#111;letter-spacing:0.123px">Customer</div>
<div class="t" style="left:190px;top:101px;line-height:14px;font-size:12px;color:#111;letter-spacing:0.081px">Contacts</div>
<div class="t" style="left:266px;top:101px;line-height:14px;font-size:12px;color:#111;letter-spacing:0.063px">Event</div>
<div class="t" style="left:323px;top:101px;line-height:14px;font-size:12px;color:#111;letter-spacing:0.130px">Dates</div>
<div class="t" style="left:383px;top:101px;line-height:14px;font-size:12px;color:#111;letter-spacing:0.218px">Schedules</div>
<div class="t" style="left:468px;top:101px;line-height:14px;font-size:12px;color:#111;letter-spacing:0.287px">Shipping</div>
<div class="t" style="left:545px;top:101px;line-height:14px;font-size:12px;color:#111;letter-spacing:0.164px">Return</div>
<div class="t" style="left:609px;top:101px;line-height:14px;font-size:12px;color:#111;letter-spacing:0.092px">Payment</div>
<div class="t" style="left:683px;top:101px;line-height:14px;font-size:12px;color:#111;letter-spacing:0.140px">Default</div>
<div class="t" style="left:750px;top:101px;line-height:14px;font-size:12px;color:#111;letter-spacing:0.082px">Cost</div>
<div class="t" style="left:803px;top:101px;line-height:14px;font-size:12px;color:#111;letter-spacing:0.071px">Sub Total</div>
<div class="t" style="left:882px;top:101px;line-height:14px;font-size:12px;color:#111;letter-spacing:0.070px">Flat Discounts</div>
<div class="t" style="left:17px;top:133px;line-height:14px;font-size:12px;;letter-spacing:0.220px">Number</div>
<div class="t" style="left:17px;top:160px;line-height:14px;font-size:12px;;letter-spacing:0.180px">Description</div>
<div class="t" style="left:17px;top:187px;line-height:14px;font-size:12px;;letter-spacing:0.136px">Date Created</div>
<div class="t" style="left:17px;top:214px;line-height:14px;font-size:12px;;letter-spacing:0.081px">Site</div>
<div class="t" style="left:17px;top:239px;line-height:14px;font-size:12px;;letter-spacing:0.027px">Project Mgr.</div>
<div class="t" style="left:17px;top:266px;line-height:14px;font-size:12px;;letter-spacing:0.136px">Sales Person</div>
<div class="t" style="left:17px;top:293px;line-height:14px;font-size:12px;;letter-spacing:0.201px">Labor Planner</div>
<div class="a" style="left:99px;top:128px;width:100px;height:24px;background:#EEEEEE;border:1px solid #7A7A7A"></div>
<div class="t" style="left:100px;top:134px;line-height:14px;font-size:12px;color:#000;letter-spacing:0.205px">ORD-1070</div>
<div class="t" style="left:212px;top:133px;line-height:14px;font-size:12px;;letter-spacing:0.188px">Version</div>
<div class="a" style="left:264px;top:128px;width:88px;height:24px;background:#EEEEEE;border:1px solid #7A7A7A"></div>
<div class="t" style="left:265px;top:134px;line-height:14px;font-size:12px;color:#000;letter-spacing:0.326px">1</div>
<svg style="left:330.6px;top:127.5px" width="20" height="20" viewBox="330.6 127.5 20 20"><line x1="342.528" y1="139.828" x2="347.12800000000004" y2="144.428" stroke="#6E6078" stroke-width="3" stroke-linecap="round"/><line x1="342.12800000000004" y1="139.028" x2="347.028" y2="143.72799999999998" stroke="#F6A640" stroke-width="2.4" stroke-linecap="round"/><circle cx="338.6" cy="135.5" r="4.9" fill="url(#glass)" stroke="#5C6478" stroke-width="1.1"/><circle cx="338.6" cy="135.5" r="4.0" fill="none" stroke="#A8D8F8" stroke-width="0.6"/></svg>
<div class="a" style="left:99px;top:155px;width:255px;height:24px;background:#fff;border:1px solid #000"></div>
<div class="a" style="left:99px;top:182px;width:100px;height:24px;background:#EEEEEE;border:1px solid #7A7A7A"></div>
<div class="t" style="left:100px;top:188px;line-height:14px;font-size:12px;color:#000;letter-spacing:0.194px">01/22/2018</div>
<div class="t" style="left:217px;top:187px;line-height:14px;font-size:12px;;letter-spacing:0.093px">Project</div>
<div class="a" style="left:264px;top:182px;width:88px;height:24px;background:#fff;border:1px solid #000"></div>
<div class="t" style="left:265px;top:188px;line-height:14px;font-size:12px;color:#000;letter-spacing:0.205px">ORD-1070</div>
<svg style="left:330.3px;top:181.5px" width="20" height="20" viewBox="330.3 181.5 20 20"><line x1="342.228" y1="193.828" x2="346.82800000000003" y2="198.428" stroke="#6E6078" stroke-width="3" stroke-linecap="round"/><line x1="341.82800000000003" y1="193.028" x2="346.728" y2="197.72799999999998" stroke="#F6A640" stroke-width="2.4" stroke-linecap="round"/><circle cx="338.3" cy="189.5" r="4.9" fill="url(#glass)" stroke="#5C6478" stroke-width="1.1"/><circle cx="338.3" cy="189.5" r="4.0" fill="none" stroke="#A8D8F8" stroke-width="0.6"/></svg>
<div class="a" style="left:99px;top:209px;width:126px;height:24px;background:#EEEEEE;border:1px solid #7A7A7A"></div>
<div class="t" style="left:100px;top:215px;line-height:14px;font-size:12px;color:#000;letter-spacing:0.055px">SANFRANCISCO</div>
<svg style="left:203.5px;top:209px" width="20" height="20" viewBox="203.5 209 20 20"><line x1="215.428" y1="221.328" x2="220.028" y2="225.928" stroke="#6E6078" stroke-width="3" stroke-linecap="round"/><line x1="215.028" y1="220.528" x2="219.928" y2="225.22799999999998" stroke="#F6A640" stroke-width="2.4" stroke-linecap="round"/><circle cx="211.5" cy="217" r="4.9" fill="url(#glass)" stroke="#5C6478" stroke-width="1.1"/><circle cx="211.5" cy="217" r="4.0" fill="none" stroke="#A8D8F8" stroke-width="0.6"/></svg>
<div class="t" style="left:233px;top:214px;line-height:14px;font-size:12px;;letter-spacing:0.064px">Sub Orders</div>
<div class="a" style="left:304px;top:209px;width:50px;height:24px;background:#EEEEEE;border:1px solid #7A7A7A"></div>
<div class="t" style="left:305px;top:215px;line-height:14px;font-size:12px;color:#000;letter-spacing:0.326px">0</div>
<div class="a" style="left:99px;top:236px;width:126px;height:24px;background:#EEEEEE;border:1px solid #8DA2BA"></div>
<svg style="left:186.5px;top:236px" width="20" height="20" viewBox="186.5 236 20 20"><line x1="198.428" y1="248.328" x2="203.028" y2="252.928" stroke="#6E6078" stroke-width="3" stroke-linecap="round"/><line x1="198.028" y1="247.528" x2="202.928" y2="252.22799999999998" stroke="#F6A640" stroke-width="2.4" stroke-linecap="round"/><circle cx="194.5" cy="244" r="4.9" fill="url(#glass)" stroke="#5C6478" stroke-width="1.1"/><circle cx="194.5" cy="244" r="4.0" fill="none" stroke="#A8D8F8" stroke-width="0.6"/></svg>
<div class="a" style="left:205px;top:237px;width:19px;height:22px;background:linear-gradient(#FFFFFF,#C9D6E4);border-left:1px solid #8DA2BA"></div><svg style="left:0;top:0" width="1159" height="740"><path d="M210.5 246.0H219.5L215.0 251.0Z" fill="#222"/></svg>
<div class="t" style="left:232px;top:239px;line-height:14px;font-size:12px;;letter-spacing:0.179px">Probability</div>
<div class="a" style="left:304px;top:236px;width:50px;height:24px;background:#EEEEEE;border:1px solid #8DA2BA"></div>
<div class="t" style="left:307px;top:242px;line-height:14px;font-size:12px;color:#000;letter-spacing:0.328px">0%</div>
<div class="a" style="left:334px;top:237px;width:19px;height:22px;background:linear-gradient(#FFFFFF,#C9D6E4);border-left:1px solid #8DA2BA"></div><svg style="left:0;top:0" width="1159" height="740"><path d="M339.5 246.0H348.5L344.0 251.0Z" fill="#222"/></svg>
<div class="a" style="left:99px;top:263px;width:255px;height:24px;background:#EEEEEE;border:1px solid #8DA2BA"></div>
<svg style="left:315.5px;top:263.5px" width="20" height="20" viewBox="315.5 263.5 20 20"><line x1="327.428" y1="275.82800000000003" x2="332.028" y2="280.428" stroke="#6E6078" stroke-width="3" stroke-linecap="round"/><line x1="327.028" y1="275.028" x2="331.928" y2="279.728" stroke="#F6A640" stroke-width="2.4" stroke-linecap="round"/><circle cx="323.5" cy="271.5" r="4.9" fill="url(#glass)" stroke="#5C6478" stroke-width="1.1"/><circle cx="323.5" cy="271.5" r="4.0" fill="none" stroke="#A8D8F8" stroke-width="0.6"/></svg>
<div class="a" style="left:334px;top:264px;width:19px;height:22px;background:linear-gradient(#FFFFFF,#C9D6E4);border-left:1px solid #8DA2BA"></div><svg style="left:0;top:0" width="1159" height="740"><path d="M339.5 273.0H348.5L344.0 278.0Z" fill="#222"/></svg>
<div class="a" style="left:99px;top:290px;width:255px;height:24px;background:#fff;border:1px solid #000"></div>
<svg style="left:331.5px;top:290px" width="20" height="20" viewBox="331.5 290 20 20"><line x1="343.428" y1="302.32800000000003" x2="348.028" y2="306.928" stroke="#6E6078" stroke-width="3" stroke-linecap="round"/><line x1="343.028" y1="301.528" x2="347.928" y2="306.228" stroke="#F6A640" stroke-width="2.4" stroke-linecap="round"/><circle cx="339.5" cy="298" r="4.9" fill="url(#glass)" stroke="#5C6478" stroke-width="1.1"/><circle cx="339.5" cy="298" r="4.0" fill="none" stroke="#A8D8F8" stroke-width="0.6"/></svg>
<div class="a" style="left:366px;top:131px;width:215px;height:98px;border:1px solid #B8B8B8"></div>
<div class="a" style="left:370px;top:126px;width:96px;height:12px;background:#fff"></div>
<div class="t" style="left:373px;top:126px;line-height:14px;font-size:12px;font-weight:bold;letter-spacing:-0.2px">Charge Duration</div>
<div class="t" style="left:369px;top:144px;line-height:14px;font-size:12px;;letter-spacing:-0.002px">Start Date/Time</div>
<div class="a" style="left:458px;top:141px;width:120px;height:24px;background:#EEEEEE;border:1px solid #7A7A7A"></div>
<div class="t" style="left:459px;top:147px;line-height:14px;font-size:12px;color:#000;letter-spacing:0.118px">01/22/2018 04:35 PM</div>
<div class="t" style="left:369px;top:173px;line-height:14px;font-size:12px;;letter-spacing:0.074px">End Date/Time</div>
<div class="a" style="left:458px;top:170px;width:120px;height:24px;background:#EEEEEE;border:1px solid #7A7A7A"></div>
<div class="t" style="left:459px;top:176px;line-height:14px;font-size:12px;color:#000;letter-spacing:0.118px">01/24/2018 04:35 PM</div>
<div class="t" style="left:369px;top:202px;line-height:14px;font-size:12px;;letter-spacing:0.205px">Duration</div>
<div class="a" style="left:458px;top:199px;width:85px;height:24px;background:#EEEEEE;border:1px solid #7A7A7A"></div>
<div class="t" style="left:459px;top:205px;line-height:14px;font-size:12px;color:#000;letter-spacing:0.326px">2d</div>
<div class="t" style="left:588px;top:146px;line-height:14px;font-size:12px;;letter-spacing:0.097px">Conv. Date</div>
<div class="a" style="left:655px;top:141px;width:89px;height:24px;background:#EEEEEE;border:1px solid #7A7A7A"></div>
<div class="a" style="left:589px;top:175px;width:13px;height:13px;border:1px solid #6A7F95;border-right-color:#B0BCC8;border-bottom-color:#6A7F95;background:linear-gradient(135deg,#FFFFFF 20%,#F6BC8A)"></div><svg style="left:589px;top:175px" width="13" height="13" viewBox="0 0 13 13"><path d="M3 7.5L5 10L10 3.5" stroke="#111" stroke-width="2" fill="none"/></svg>
<div class="t" style="left:606px;top:175px;line-height:14px;font-size:12px;;letter-spacing:0.163px">Show Suggestions</div>
<div class="a" style="left:589px;top:200px;width:13px;height:13px;border:1px solid #6A7F95;border-right-color:#B0BCC8;border-bottom-color:#6A7F95;background:linear-gradient(135deg,#FFFFFF 20%,#F6BC8A)"></div>
<div class="t" style="left:606px;top:200px;line-height:14px;font-size:12px;;letter-spacing:0.100px">Event Pricing</div>
<div class="t" style="left:362px;top:241px;line-height:14px;font-size:12px;;letter-spacing:0.123px">Customer</div>
<div class="a" style="left:421px;top:236px;width:160px;height:24px;background:#EEEEEE;border:1px solid #7A7A7A"></div>
<div class="t" style="left:422px;top:242px;line-height:14px;font-size:12px;color:#000;letter-spacing:-0.004px">KSB</div>
<svg style="left:559.5px;top:236.5px" width="20" height="20" viewBox="559.5 236.5 20 20"><line x1="571.428" y1="248.828" x2="576.028" y2="253.428" stroke="#6E6078" stroke-width="3" stroke-linecap="round"/><line x1="571.028" y1="248.028" x2="575.928" y2="252.72799999999998" stroke="#F6A640" stroke-width="2.4" stroke-linecap="round"/><circle cx="567.5" cy="244.5" r="4.9" fill="url(#glass)" stroke="#5C6478" stroke-width="1.1"/><circle cx="567.5" cy="244.5" r="4.0" fill="none" stroke="#A8D8F8" stroke-width="0.6"/></svg>
<div class="t" style="left:362px;top:270px;line-height:14px;font-size:12px;;letter-spacing:0.092px">Contact</div>
<div class="a" style="left:421px;top:265px;width:160px;height:24px;background:#EEEEEE;border:1px solid #7A7A7A"></div>
<div class="t" style="left:422px;top:271px;line-height:14px;font-size:12px;color:#000;letter-spacing:0.118px">Steven Hyde</div>
<svg style="left:559.5px;top:265.5px" width="20" height="20" viewBox="559.5 265.5 20 20"><line x1="571.428" y1="277.82800000000003" x2="576.028" y2="282.428" stroke="#6E6078" stroke-width="3" stroke-linecap="round"/><line x1="571.028" y1="277.028" x2="575.928" y2="281.728" stroke="#F6A640" stroke-width="2.4" stroke-linecap="round"/><circle cx="567.5" cy="273.5" r="4.9" fill="url(#glass)" stroke="#5C6478" stroke-width="1.1"/><circle cx="567.5" cy="273.5" r="4.0" fill="none" stroke="#A8D8F8" stroke-width="0.6"/></svg>
<div class="t" style="left:362px;top:299px;line-height:14px;font-size:12px;;letter-spacing:0.049px">Contact Tel #</div>
<div class="a" style="left:451px;top:294px;width:130px;height:24px;background:#EEEEEE;border:1px solid #7A7A7A"></div>
<div class="t" style="left:587px;top:241px;line-height:14px;font-size:12px;;letter-spacing:0.094px">Bill To</div>
<div class="a" style="left:654px;top:236px;width:160px;height:24px;background:#EEEEEE;border:1px solid #7A7A7A"></div>
<div class="t" style="left:655px;top:242px;line-height:14px;font-size:12px;color:#000;letter-spacing:-0.004px">KSB</div>
<svg style="left:792px;top:236px" width="20" height="20" viewBox="792 236 20 20"><line x1="803.928" y1="248.328" x2="808.528" y2="252.928" stroke="#6E6078" stroke-width="3" stroke-linecap="round"/><line x1="803.528" y1="247.528" x2="808.428" y2="252.22799999999998" stroke="#F6A640" stroke-width="2.4" stroke-linecap="round"/><circle cx="800" cy="244" r="4.9" fill="url(#glass)" stroke="#5C6478" stroke-width="1.1"/><circle cx="800" cy="244" r="4.0" fill="none" stroke="#A8D8F8" stroke-width="0.6"/></svg>
<div class="t" style="left:587px;top:270px;line-height:14px;font-size:12px;;letter-spacing:0.109px">Bill Contact</div>
<div class="a" style="left:654px;top:265px;width:160px;height:24px;background:#EEEEEE;border:1px solid #7A7A7A"></div>
<div class="t" style="left:655px;top:271px;line-height:14px;font-size:12px;color:#000;letter-spacing:0.118px">Steven Hyde</div>
<svg style="left:792px;top:265px" width="20" height="20" viewBox="792 265 20 20"><line x1="803.928" y1="277.32800000000003" x2="808.528" y2="281.928" stroke="#6E6078" stroke-width="3" stroke-linecap="round"/><line x1="803.528" y1="276.528" x2="808.428" y2="281.228" stroke="#F6A640" stroke-width="2.4" stroke-linecap="round"/><circle cx="800" cy="273" r="4.9" fill="url(#glass)" stroke="#5C6478" stroke-width="1.1"/><circle cx="800" cy="273" r="4.0" fill="none" stroke="#A8D8F8" stroke-width="0.6"/></svg>
<div class="t" style="left:587px;top:299px;line-height:14px;font-size:12px;;letter-spacing:0.326px">Language</div>
<div class="a" style="left:654px;top:294px;width:90px;height:24px;background:#EEEEEE;border:1px solid #7A7A7A"></div>
<svg style="left:722.5px;top:294px" width="20" height="20" viewBox="722.5 294 20 20"><circle cx="730.5" cy="302" r="4.9" fill="#E4E4E4" stroke="#C8C8C8" stroke-width="1.4"/><line x1="734.175" y1="305.675" x2="738.9749999999999" y2="310.475" stroke="#C4C4C4" stroke-width="3" stroke-linecap="round"/></svg>
<div class="t" style="left:826px;top:248px;line-height:14px;font-size:12px;;letter-spacing:0.102px">Document Folder:</div>
<div class="a" style="left:826px;top:264px;width:216px;height:49px;background:#EEEEEE;border:2px solid #7A8490"></div>
<div class="a" style="left:1009px;top:239px;width:49px;height:23px;border:1px solid #B8B8B8;background:#fff"></div>
<div class="a" style="left:1019px;top:241px;width:30px;height:20px;border:1px solid #6A6262;border-radius:2px;background:#fff"></div>
<div class="t" style="left:1019px;top:245px;width:30px;text-align:center;font-size:10px;font-weight:bold;line-height:14px;color:#000">Reset</div>
<div class="a" style="left:752px;top:148px;width:290px;height:83px;background:#C6DDF3;border:1px solid #5A7FC0;border-bottom-color:#7A8898;border-right-color:#7A8898"></div>
<div class="a" style="left:753px;top:149px;width:288px;height:1px;background:#fff"></div>
<div class="a" style="left:754px;top:152px;width:285px;height:76px;background:#fff"></div>
<div class="a" style="left:754px;top:152px;width:284px;height:75px;background:#fff;border:1px solid #A8A8A8"></div>
<svg style="left:0;top:0" width="1159" height="740" viewBox="0 0 1159 740"><path d="M755 149V132.5L760.5 127H843V149Z" fill="#fff"/><path d="M756 149V133L761 128H843V149Z" fill="#C44E2D"/><path d="M754.5 149V132.5L760.5 126.5H843.5V149" fill="none" stroke="#4C78C4" stroke-width="1"/><rect x="755" y="148" width="88" height="1" fill="#C6DDF3"/><rect x="755" y="149" width="88" height="1" fill="#C6DDF3"/><path d="M845 148V132.5L850.5 127H963V148Z" fill="#fff"/><path d="M846 148V133L851 128H963V148Z" fill="#FE9B4A"/><path d="M844.5 148V132.5L850.5 126.5H963.5V148" fill="none" stroke="#7890B0" stroke-width="1"/></svg>
<div class="t" style="left:760px;top:131px;line-height:14px;font-size:12px;color:#fff;font-weight:bold">Comments</div>
<div class="t" style="left:850px;top:131px;line-height:14px;font-size:12px;color:#111;letter-spacing:0.177px">LaborComments</div>
<div class="a" style="left:761px;top:154px;width:269px;height:69px;background:#EEEEEE;border:2px solid #7A8490"></div>
<svg style="left:1007.5px;top:154.5px" width="20" height="20" viewBox="1007.5 154.5 20 20"><line x1="1019.428" y1="166.828" x2="1024.028" y2="171.428" stroke="#6E6078" stroke-width="3" stroke-linecap="round"/><line x1="1019.028" y1="166.028" x2="1023.928" y2="170.72799999999998" stroke="#F6A640" stroke-width="2.4" stroke-linecap="round"/><circle cx="1015.5" cy="162.5" r="4.9" fill="url(#glass)" stroke="#5C6478" stroke-width="1.1"/><circle cx="1015.5" cy="162.5" r="4.0" fill="none" stroke="#A8D8F8" stroke-width="0.6"/></svg>
<div class="a" style="left:8px;top:356px;width:1143px;height:315px;background:#C6DDF3;border:1px solid #5A7FC0;border-bottom-color:#7A8898;border-right-color:#7A8898"></div>
<div class="a" style="left:9px;top:357px;width:1141px;height:1px;background:#fff"></div>
<div class="a" style="left:10px;top:360px;width:1138px;height:308px;background:#fff"></div>
<div class="a" style="left:10px;top:360px;width:1137px;height:307px;background:#fff;border:1px solid #A8A8A8"></div>
<svg style="left:0;top:0" width="1159" height="740" viewBox="0 0 1159 740"><path d="M11 357V340.5L16.5 335H76V357Z" fill="#fff"/><path d="M12 357V341L17 336H76V357Z" fill="#C44E2D"/><path d="M10.5 357V340.5L16.5 334.5H76.5V357" fill="none" stroke="#4C78C4" stroke-width="1"/><rect x="11" y="356" width="65" height="1" fill="#C6DDF3"/><rect x="11" y="357" width="65" height="1" fill="#C6DDF3"/><path d="M78 356V340.5L83.5 335H115V356Z" fill="#fff"/><path d="M79 356V341L84 336H115V356Z" fill="#FE9B4A"/><path d="M77.5 356V340.5L83.5 334.5H115.5V356" fill="none" stroke="#7890B0" stroke-width="1"/></svg>
<div class="t" style="left:16px;top:339px;line-height:14px;font-size:12px;color:#fff;font-weight:bold">Item(s)</div>
<div class="t" style="left:83px;top:339px;line-height:14px;font-size:12px;color:#111;letter-spacing:0.000px"></div>
<div class="t" style="left:80px;top:339px;line-height:14px;font-size:12px;color:#F0E050;letter-spacing:0.262px">Labor</div>
<div class="t" style="left:79px;top:338px;line-height:14px;font-size:12px;color:#CC8034;letter-spacing:0.262px">Labor</div>
<div class="a" style="left:12px;top:362px;width:1133px;height:303px;border:1px solid #56667A;border-right-color:#8A98A8;border-bottom-color:#56667A;background:#fff"></div>
<div class="a" style="left:13px;top:363px;width:1131px;height:20px;background:#FF6B3D"></div>
<div class="a" style="left:13px;top:363px;width:14px;height:19px;background:#C44E2D;border-left:1px solid #FF6B3D;border-top:1px solid #FF6B3D;border-right:1px solid #7A2C16;border-bottom:1px solid #7A2C16"></div>
<div class="a" style="left:28px;top:363px;width:14px;height:19px;background:#C44E2D;border-left:1px solid #FF6B3D;border-top:1px solid #FF6B3D;border-right:1px solid #7A2C16;border-bottom:1px solid #7A2C16"></div>
<div class="a" style="left:43px;top:363px;width:24px;height:19px;background:#C44E2D;border-left:1px solid #FF6B3D;border-top:1px solid #FF6B3D;border-right:1px solid #7A2C16;border-bottom:1px solid #7A2C16"></div>
<div class="a" style="left:68px;top:363px;width:24px;height:19px;background:#C44E2D;border-left:1px solid #FF6B3D;border-top:1px solid #FF6B3D;border-right:1px solid #7A2C16;border-bottom:1px solid #7A2C16"></div>
<div class="a" style="left:93px;top:363px;width:24px;height:19px;background:#C44E2D;border-left:1px solid #FF6B3D;border-top:1px solid #FF6B3D;border-right:1px solid #7A2C16;border-bottom:1px solid #7A2C16"></div>
<div class="a" style="left:118px;top:363px;width:14px;height:19px;background:#C44E2D;border-left:1px solid #FF6B3D;border-top:1px solid #FF6B3D;border-right:1px solid #7A2C16;border-bottom:1px solid #7A2C16"></div>
<div class="a" style="left:133px;top:363px;width:19px;height:19px;background:#C44E2D;border-left:1px solid #FF6B3D;border-top:1px solid #FF6B3D;border-right:1px solid #7A2C16;border-bottom:1px solid #7A2C16"></div>
<div class="a" style="left:153px;top:363px;width:44px;height:19px;background:#C44E2D;border-left:1px solid #FF6B3D;border-top:1px solid #FF6B3D;border-right:1px solid #7A2C16;border-bottom:1px solid #7A2C16"></div>
<div class="a" style="left:198px;top:363px;width:190px;height:19px;background:#C44E2D;border-left:1px solid #FF6B3D;border-top:1px solid #FF6B3D;border-right:1px solid #7A2C16;border-bottom:1px solid #7A2C16"></div>
<div class="a" style="left:389px;top:363px;width:309px;height:19px;background:#C44E2D;border-left:1px solid #FF6B3D;border-top:1px solid #FF6B3D;border-right:1px solid #7A2C16;border-bottom:1px solid #7A2C16"></div>
<div class="a" style="left:699px;top:363px;width:54px;height:19px;background:#C44E2D;border-left:1px solid #FF6B3D;border-top:1px solid #FF6B3D;border-right:1px solid #7A2C16;border-bottom:1px solid #7A2C16"></div>
<div class="a" style="left:754px;top:363px;width:29px;height:19px;background:#C44E2D;border-left:1px solid #FF6B3D;border-top:1px solid #FF6B3D;border-right:1px solid #7A2C16;border-bottom:1px solid #7A2C16"></div>
<div class="a" style="left:784px;top:363px;width:39px;height:19px;background:#C44E2D;border-left:1px solid #FF6B3D;border-top:1px solid #FF6B3D;border-right:1px solid #7A2C16;border-bottom:1px solid #7A2C16"></div>
<div class="a" style="left:824px;top:363px;width:29px;height:19px;background:#C44E2D;border-left:1px solid #FF6B3D;border-top:1px solid #FF6B3D;border-right:1px solid #7A2C16;border-bottom:1px solid #7A2C16"></div>
<div class="a" style="left:854px;top:363px;width:39px;height:19px;background:#C44E2D;border-left:1px solid #FF6B3D;border-top:1px solid #FF6B3D;border-right:1px solid #7A2C16;border-bottom:1px solid #7A2C16"></div>
<div class="a" style="left:894px;top:363px;width:64px;height:19px;background:#C44E2D;border-left:1px solid #FF6B3D;border-top:1px solid #FF6B3D;border-right:1px solid #7A2C16;border-bottom:1px solid #7A2C16"></div>
<div class="a" style="left:959px;top:363px;width:59px;height:19px;background:#C44E2D;border-left:1px solid #FF6B3D;border-top:1px solid #FF6B3D;border-right:1px solid #7A2C16;border-bottom:1px solid #7A2C16"></div>
<div class="a" style="left:1019px;top:363px;width:67px;height:19px;background:#C44E2D;border-left:1px solid #FF6B3D;border-top:1px solid #FF6B3D;border-right:1px solid #7A2C16;border-bottom:1px solid #7A2C16"></div>
<div class="a" style="left:1087px;top:363px;width:57px;height:19px;background:#C44E2D;border-left:1px solid #FF6B3D;border-top:1px solid #FF6B3D;border-right:1px solid #7A2C16;border-bottom:1px solid #7A2C16"></div>
<div class="a" style="left:0;top:0;width:1144px;height:740px;overflow:hidden"><div class="t" style="left:13px;top:367px;width:14px;text-align:center;color:#fff;letter-spacing:0.334px">C</div><div class="t" style="left:28px;top:367px;width:14px;text-align:center;color:#fff;letter-spacing:-0.004px">S</div><div class="t" style="left:43px;top:367px;width:24px;text-align:center;color:#fff;letter-spacing:-0.111px">I.C</div><div class="t" style="left:68px;top:367px;width:24px;text-align:center;color:#fff;letter-spacing:-0.331px">I.W</div><div class="t" style="left:93px;top:367px;width:24px;text-align:center;color:#fff;letter-spacing:-0.334px">I.I</div><div class="t" style="left:118px;top:367px;width:14px;text-align:center;color:#fff;letter-spacing:-0.004px">X</div><div class="t" style="left:133px;top:367px;width:19px;text-align:center;color:#fff;letter-spacing:0.326px">L</div><div class="t" style="left:153px;top:367px;width:44px;text-align:center;color:#fff;letter-spacing:0.108px">Action</div><div class="t" style="left:198px;top:367px;width:190px;text-align:center;color:#fff;letter-spacing:0.031px">Product ID</div><div class="t" style="left:389px;top:367px;width:309px;text-align:center;color:#fff;letter-spacing:0.180px">Description</div><div class="t" style="left:699px;top:367px;width:54px;text-align:center;color:#fff;letter-spacing:0.205px">Duration</div><div class="t" style="left:754px;top:367px;width:29px;text-align:center;color:#fff;letter-spacing:-0.109px">DIW</div><div class="t" style="left:784px;top:367px;width:39px;text-align:center;color:#fff;letter-spacing:0.001px">DIM</div><div class="t" style="left:824px;top:367px;width:29px;text-align:center;color:#fff;letter-spacing:-0.223px">Qty</div><div class="t" style="left:854px;top:367px;width:39px;text-align:center;color:#fff;letter-spacing:0.165px">Unit</div><div class="t" style="left:894px;top:367px;width:64px;text-align:center;color:#fff;letter-spacing:0.099px">Unit Price</div><div class="t" style="left:959px;top:367px;width:59px;text-align:center;color:#fff;letter-spacing:0.164px">Discount</div><div class="t" style="left:1019px;top:367px;width:67px;text-align:center;color:#fff;letter-spacing:0.080px">Net Each</div><div class="t" style="left:1096px;top:367px;line-height:14px;font-size:12px;color:#fff;letter-spacing:0.109px">Net Discount</div></div>
<div class="a" style="left:13px;top:383px;width:1131px;height:19px;background:#FE9B4A;border-bottom:1px solid #D08840"></div>
<div class="a" style="left:0;top:0;width:1144px;height:740px;overflow:hidden"><div class="a" style="left:27px;top:383px;width:1px;height:19px;background:#B8692C"></div><div class="a" style="left:14px;top:386px;width:13px;height:13px;border:1px solid #fff;background:linear-gradient(135deg,#FFEEDD 10%,#F0802A 90%)"><div class="a" style="left:0;top:0;width:11px;height:11px;border:1px solid #5A6E80"></div></div><div class="a" style="left:42px;top:383px;width:1px;height:19px;background:#B8692C"></div><div class="a" style="left:29px;top:386px;width:13px;height:13px;border:1px solid #fff;background:linear-gradient(135deg,#FFEEDD 10%,#F0802A 90%)"><div class="a" style="left:0;top:0;width:11px;height:11px;border:1px solid #5A6E80"></div></div><div class="a" style="left:67px;top:383px;width:1px;height:19px;background:#B8692C"></div><div class="a" style="left:49px;top:386px;width:13px;height:13px;border:1px solid #fff;background:linear-gradient(135deg,#FFEEDD 10%,#F0802A 90%)"><div class="a" style="left:0;top:0;width:11px;height:11px;border:1px solid #5A6E80"></div></div><div class="a" style="left:92px;top:383px;width:1px;height:19px;background:#B8692C"></div><div class="a" style="left:74px;top:386px;width:13px;height:13px;border:1px solid #fff;background:linear-gradient(135deg,#FFEEDD 10%,#F0802A 90%)"><div class="a" style="left:0;top:0;width:11px;height:11px;border:1px solid #5A6E80"></div></div><div class="a" style="left:117px;top:383px;width:1px;height:19px;background:#B8692C"></div><div class="a" style="left:99px;top:386px;width:13px;height:13px;border:1px solid #fff;background:linear-gradient(135deg,#FFEEDD 10%,#F0802A 90%)"><div class="a" style="left:0;top:0;width:11px;height:11px;border:1px solid #5A6E80"></div></div><div class="a" style="left:132px;top:383px;width:1px;height:19px;background:#B8692C"></div><div class="a" style="left:119px;top:386px;width:13px;height:13px;border:1px solid #fff;background:linear-gradient(135deg,#FFEEDD 10%,#F0802A 90%)"><div class="a" style="left:0;top:0;width:11px;height:11px;border:1px solid #5A6E80"></div></div><div class="a" style="left:152px;top:383px;width:1px;height:19px;background:#B8692C"></div><div class="a" style="left:136px;top:386px;width:13px;height:13px;border:1px solid #fff;background:linear-gradient(135deg,#FFEEDD 10%,#F0802A 90%)"><div class="a" style="left:0;top:0;width:11px;height:11px;border:1px solid #5A6E80"></div></div><div class="a" style="left:197px;top:383px;width:1px;height:19px;background:#B8692C"></div><div class="t" style="left:154px;top:386px;line-height:14px;font-size:12px;color:#111;letter-spacing:0.163px">Rent</div><div class="a" style="left:388px;top:383px;width:1px;height:19px;background:#B8692C"></div><div class="t" style="left:199px;top:386px;line-height:14px;font-size:12px;color:#111;letter-spacing:0.076px">HPTOUCHSMART_</div><div class="a" style="left:698px;top:383px;width:1px;height:19px;background:#B8692C"></div><div class="t" style="left:397px;top:386px;line-height:14px;font-size:12px;color:#111;letter-spacing:0.076px">HPTOUCHSMART_</div><div class="a" style="left:753px;top:383px;width:1px;height:19px;background:#B8692C"></div><div class="t" style="left:700px;top:386px;line-height:14px;font-size:12px;color:#111;letter-spacing:0.326px">2d</div><div class="a" style="left:783px;top:383px;width:1px;height:19px;background:#B8692C"></div><div class="t" style="left:754px;top:386px;width:27px;text-align:right;color:#111;letter-spacing:0.161px">7.00</div><div class="a" style="left:823px;top:383px;width:1px;height:19px;background:#B8692C"></div><div class="t" style="left:784px;top:386px;width:37px;text-align:right;color:#111;letter-spacing:0.194px">28.00</div><div class="a" style="left:853px;top:383px;width:1px;height:19px;background:#B8692C"></div><div class="t" style="left:824px;top:386px;width:27px;text-align:right;color:#111;letter-spacing:0.326px">1</div><div class="a" style="left:893px;top:383px;width:1px;height:19px;background:#B8692C"></div><div class="t" style="left:855px;top:386px;line-height:14px;font-size:12px;color:#111;letter-spacing:0.220px">Day</div><div class="a" style="left:958px;top:383px;width:1px;height:19px;background:#B8692C"></div><div class="t" style="left:894px;top:386px;width:62px;text-align:right;color:#111;letter-spacing:0.161px">0.00</div><div class="a" style="left:1018px;top:383px;width:1px;height:19px;background:#B8692C"></div><div class="t" style="left:959px;top:386px;width:57px;text-align:right;color:#111;letter-spacing:0.161px">0.00</div><div class="a" style="left:1086px;top:383px;width:1px;height:19px;background:#B8692C"></div><div class="t" style="left:1019px;top:386px;width:65px;text-align:right;color:#111;letter-spacing:0.161px">0.00</div><div class="t" style="left:1087px;top:386px;width:63px;text-align:right;color:#111;letter-spacing:0.161px">0.00</div></div>
<div class="a" style="left:198px;top:383px;width:190px;height:18px;border:1px solid #E82020"></div>
<div class="a" style="left:13px;top:647px;width:1131px;height:17px;background:#EEEEEE;border-top:1px solid #7890A8;border-bottom:1px solid #C6DDF3"></div>
<div class="a" style="left:13px;top:662px;width:1131px;height:1px;background:#7890A8"></div>
<div class="a" style="left:13px;top:648px;width:1131px;height:1px;background:#fff"></div>
<div class="a" style="left:14px;top:648px;width:14px;height:14px;background:#EEEEEE;border-top:1px solid #fff"></div>
<div class="a" style="left:1127px;top:648px;width:16px;height:14px;background:#EEEEEE;border-left:1px solid #7890A8;border-right:1px solid #7890A8"></div>
<svg style="left:0;top:0" width="1159" height="740"><path d="M19 655.5L23 651.5V659.5Z" fill="#222"/><path d="M1138 655.5L1134 651.5V659.5Z" fill="#222"/></svg>
<div class="a" style="left:28px;top:647px;width:555px;height:16px;background:linear-gradient(#E8925C,#F2C4A0 2px,#E9AC80 50%,#E6A06E);border:1px solid #FFC000"></div>
<svg style="left:0;top:0" width="1159" height="740"><path d="M303.5 651V659M305.5 651V659M307.5 651V659" stroke="#8A7A90" stroke-width="1"/><path d="M304.5 652V661M306.5 652V661M308.5 652V661" stroke="#F8D8C0" stroke-width="1"/></svg>
<div class="t" style="left:70px;top:678px;line-height:16px;font-size:14px;font-weight:bold;color:#222">Items</div>
<div class="a" style="left:120px;top:673px;width:100px;height:24px;background:#EEEEEE;border:1px solid #7A7A7A"></div>
<div class="t" style="left:235px;top:678px;line-height:16px;font-size:14px;font-weight:bold;color:#222">Labor</div>
<div class="a" style="left:287px;top:673px;width:100px;height:24px;background:#EEEEEE;border:1px solid #7A7A7A"></div>
<div class="t" style="left:446px;top:678px;line-height:16px;font-size:14px;font-weight:bold;color:#222">Sub Total</div>
<div class="a" style="left:525px;top:673px;width:100px;height:24px;background:#EEEEEE;border:1px solid #7A7A7A"></div>
<div class="t" style="left:637px;top:678px;line-height:16px;font-size:14px;font-weight:bold;color:#222">Tax</div>
<div class="a" style="left:670px;top:673px;width:100px;height:24px;background:#EEEEEE;border:1px solid #7A7A7A"></div>
<div class="a" style="left:813px;top:673px;width:89px;height:23px;background:#fff;border:1px solid #C8C8C8"></div>
<div class="t" style="left:813px;top:678px;width:89px;text-align:center;font-weight:bold;font-size:14px;line-height:16px;color:#222">Total</div>
<div class="a" style="left:906px;top:673px;width:100px;height:24px;background:#EEEEEE;border:1px solid #7A7A7A"></div>
<div class="t" style="left:907px;top:677px;line-height:16px;font-size:14px;font-weight:bold;color:#111">0.00</div>
<div class="a" style="left:9px;top:708px;width:1141px;height:23px;background:#fff;border:1px solid #A0A0A0;border-right-color:#C4C4C4;border-bottom-color:#C4C4C4"></div>
</body></html>
